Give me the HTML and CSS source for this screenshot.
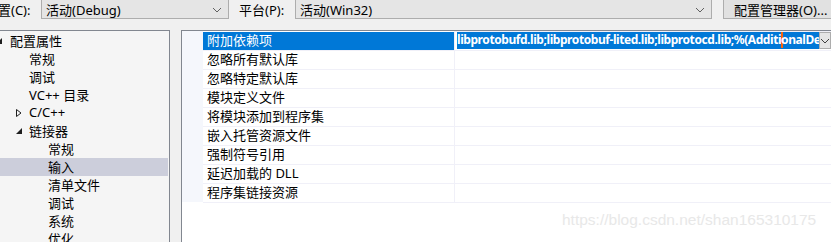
FILE: index.html
```html
<!DOCTYPE html>
<html lang="zh-CN">
<head>
    <meta charset="UTF-8">
    <title>属性页</title>
    <link rel="stylesheet" href="styles.css">
</head>
<body>
    <div class="toolbar">
        <span class="label label-first">配置(C):</span>
        <div class="combo combo-config">
            <span>活动(Debug)</span>
            <svg class="chev" width="10" height="6" viewBox="0 0 10 6"><path d="M1 1l4 4 4-4" fill="none" stroke="#606060" stroke-width="1"/></svg>
        </div>
        <span class="label label-platform">平台(P):</span>
        <div class="combo combo-platform">
            <span>活动(Win32)</span>
            <svg class="chev" width="10" height="6" viewBox="0 0 10 6"><path d="M1 1l4 4 4-4" fill="none" stroke="#606060" stroke-width="1"/></svg>
        </div>
        <div class="btn">配置管理器(O)...</div>
    </div>

    <div class="main">
        <div class="tree">
            <div class="node lv0">
                <span class="twist"><svg width="8" height="8" viewBox="0 0 8 8"><path d="M7 1v6H1z" fill="#1e1e1e"/></svg></span>
                <span>配置属性</span>
            </div>
            <div class="node lv1"><span class="twist"></span><span>常规</span></div>
            <div class="node lv1"><span class="twist"></span><span>调试</span></div>
            <div class="node lv1"><span class="twist"></span><span>VC++ 目录</span></div>
            <div class="node lv1">
                <span class="twist"><svg width="8" height="10" viewBox="0 0 8 10"><path d="M1.5 1.5v7l4.5-3.5z" fill="none" stroke="#1e1e1e" stroke-width="1"/></svg></span>
                <span>C/C++</span>
            </div>
            <div class="node lv1">
                <span class="twist"><svg width="8" height="8" viewBox="0 0 8 8"><path d="M7 1v6H1z" fill="#1e1e1e"/></svg></span>
                <span>链接器</span>
            </div>
            <div class="node lv2"><span class="twist"></span><span>常规</span></div>
            <div class="node lv2 selected"><span class="twist"></span><span>输入</span></div>
            <div class="node lv2"><span class="twist"></span><span>清单文件</span></div>
            <div class="node lv2"><span class="twist"></span><span>调试</span></div>
            <div class="node lv2"><span class="twist"></span><span>系统</span></div>
            <div class="node lv2"><span class="twist"></span><span>优化</span></div>
        </div>

        <div class="grid">
            <div class="rows">
                <div class="gut"></div>
                <div class="name sel">附加依赖项</div>
                <div class="val">
                    <div class="edit">
                        <span class="edit-text">libprotobufd.lib;libprotobuf-lited.lib;libprotocd.lib;%(Additi<span class="caret"></span>onalDependencies)</span>
                        <span class="drop"><svg width="10" height="6" viewBox="0 0 10 6"><path d="M1 1l4 4 4-4" fill="none" stroke="#404040" stroke-width="1"/></svg></span>
                    </div>
                </div>

                <div class="gut"></div><div class="name">忽略所有默认库</div><div class="val"></div>
                <div class="gut"></div><div class="name">忽略特定默认库</div><div class="val"></div>
                <div class="gut"></div><div class="name">模块定义文件</div><div class="val"></div>
                <div class="gut"></div><div class="name">将模块添加到程序集</div><div class="val"></div>
                <div class="gut"></div><div class="name">嵌入托管资源文件</div><div class="val"></div>
                <div class="gut"></div><div class="name">强制符号引用</div><div class="val"></div>
                <div class="gut"></div><div class="name">延迟加载的 DLL</div><div class="val"></div>
                <div class="gut"></div><div class="name last">程序集链接资源</div><div class="val last"></div>
            </div>
        </div>
    </div>

    <div class="watermark">https://blog.csdn.net/shan165310175</div>
</body>
</html>
```

FILE: styles.css
```css
* {
    margin: 0;
    padding: 0;
    box-sizing: border-box;
}

body {
    width: 831px;
    height: 242px;
    overflow: hidden;
    background: #f0f0f0;
    font-family: "Noto Sans", "Noto Sans CJK SC", sans-serif;
    font-size: 13px;
    color: #000;
    position: relative;
}

/* 顶部配置栏 */
.toolbar {
    display: flex;
    align-items: flex-start;
    height: 24px;
    margin-top: -5px;
}

.toolbar > * {
    flex-shrink: 0;
}

.label {
    height: 24px;
    padding-top: 4px;
    display: flex;
    align-items: center;
    white-space: nowrap;
}

.label-first {
    margin-left: -15px;
    width: 56px;
}

.label-platform {
    width: 56px;
}

.combo {
    height: 24px;
    padding: 4px 6px 0 4px;
    display: flex;
    align-items: center;
    justify-content: space-between;
    background: #e5e5e5;
    border: 1px solid #adadad;
}

.combo-config {
    width: 188px;
    margin-right: 10px;
}

.combo-platform {
    width: 417px;
    margin-right: 11px;
}

.chev {
    margin-top: 1px;
}

.btn {
    height: 24px;
    width: 120px;
    padding: 4px 0 0 10px;
    display: flex;
    align-items: center;
    background: #e1e1e1;
    border: 1px solid #adadad;
    white-space: nowrap;
}

/* 左侧树 */
.main {
    display: flex;
    margin-top: 11px;
}

.tree {
    width: 180px;
    height: 240px;
    margin-left: -10px;
    background: #f5f5f5;
    border: 1px solid #828790;
    padding-top: 1px;
    flex-shrink: 0;
}

.node {
    height: 18px;
    padding-bottom: 2px;
    display: flex;
    align-items: center;
    white-space: nowrap;
}

.node.lv0 { padding-left: 5px; }
.node.lv1 { padding-left: 24px; }
.node.lv2 { padding-left: 43px; }

.node.selected {
    background: #cccedb;
    margin-right: 1px;
}

.twist {
    width: 14px;
    height: 16px;
    display: flex;
    align-items: center;
    padding-top: 1px;
}

.lv0 .twist svg {
    margin-left: -1px;
}

/* 右侧属性网格 */
.grid {
    flex: 1;
    margin-left: 11px;
    height: 240px;
    background: #fff;
    border-left: 1px solid #828790;
    border-top: 1px solid #828790;
}

.rows {
    display: grid;
    grid-template-columns: 21px 251px 1fr;
}

.gut {
    height: 19px;
    background: #f5f7fc;
}

.name, .val {
    height: 19px;
    border-top: 1px solid #f0f0f8;
    white-space: nowrap;
    overflow: hidden;
}

.name {
    padding-left: 4px;
    line-height: 16px;
}

.name.sel {
    background: #0078d7;
    color: #fff;
    border-top-color: #fff;
}

.val {
    border-left: 1px solid #f0f0f8;
}

.name.last, .val.last {
    height: 20px;
    border-bottom: 1px solid #f0f0f8;
}

.edit {
    display: flex;
    height: 18px;
    padding-left: 2px;
}

.edit-text {
    width: 362px;
    overflow: hidden;
    background: #0078d7;
    color: #fff;
    font-weight: bold;
    font-size: 12px;
    line-height: 16px;
    height: 17px;
    letter-spacing: -0.43px;
}

.caret {
    display: inline-block;
    width: 1.5px;
    height: 16px;
    margin-right: -1.5px;
    vertical-align: -4px;
    background: #f7630c;
}

.drop {
    width: 12px;
    height: 17px;
    background: #e5e5e5;
    border: 1px solid #adadad;
    display: flex;
    align-items: center;
    justify-content: center;
}

.watermark {
    position: absolute;
    left: 562px;
    top: 211px;
    font-family: "Liberation Sans", Arial, sans-serif;
    font-size: 15.5px;
    color: #e8e8e8;
    white-space: nowrap;
}
```
